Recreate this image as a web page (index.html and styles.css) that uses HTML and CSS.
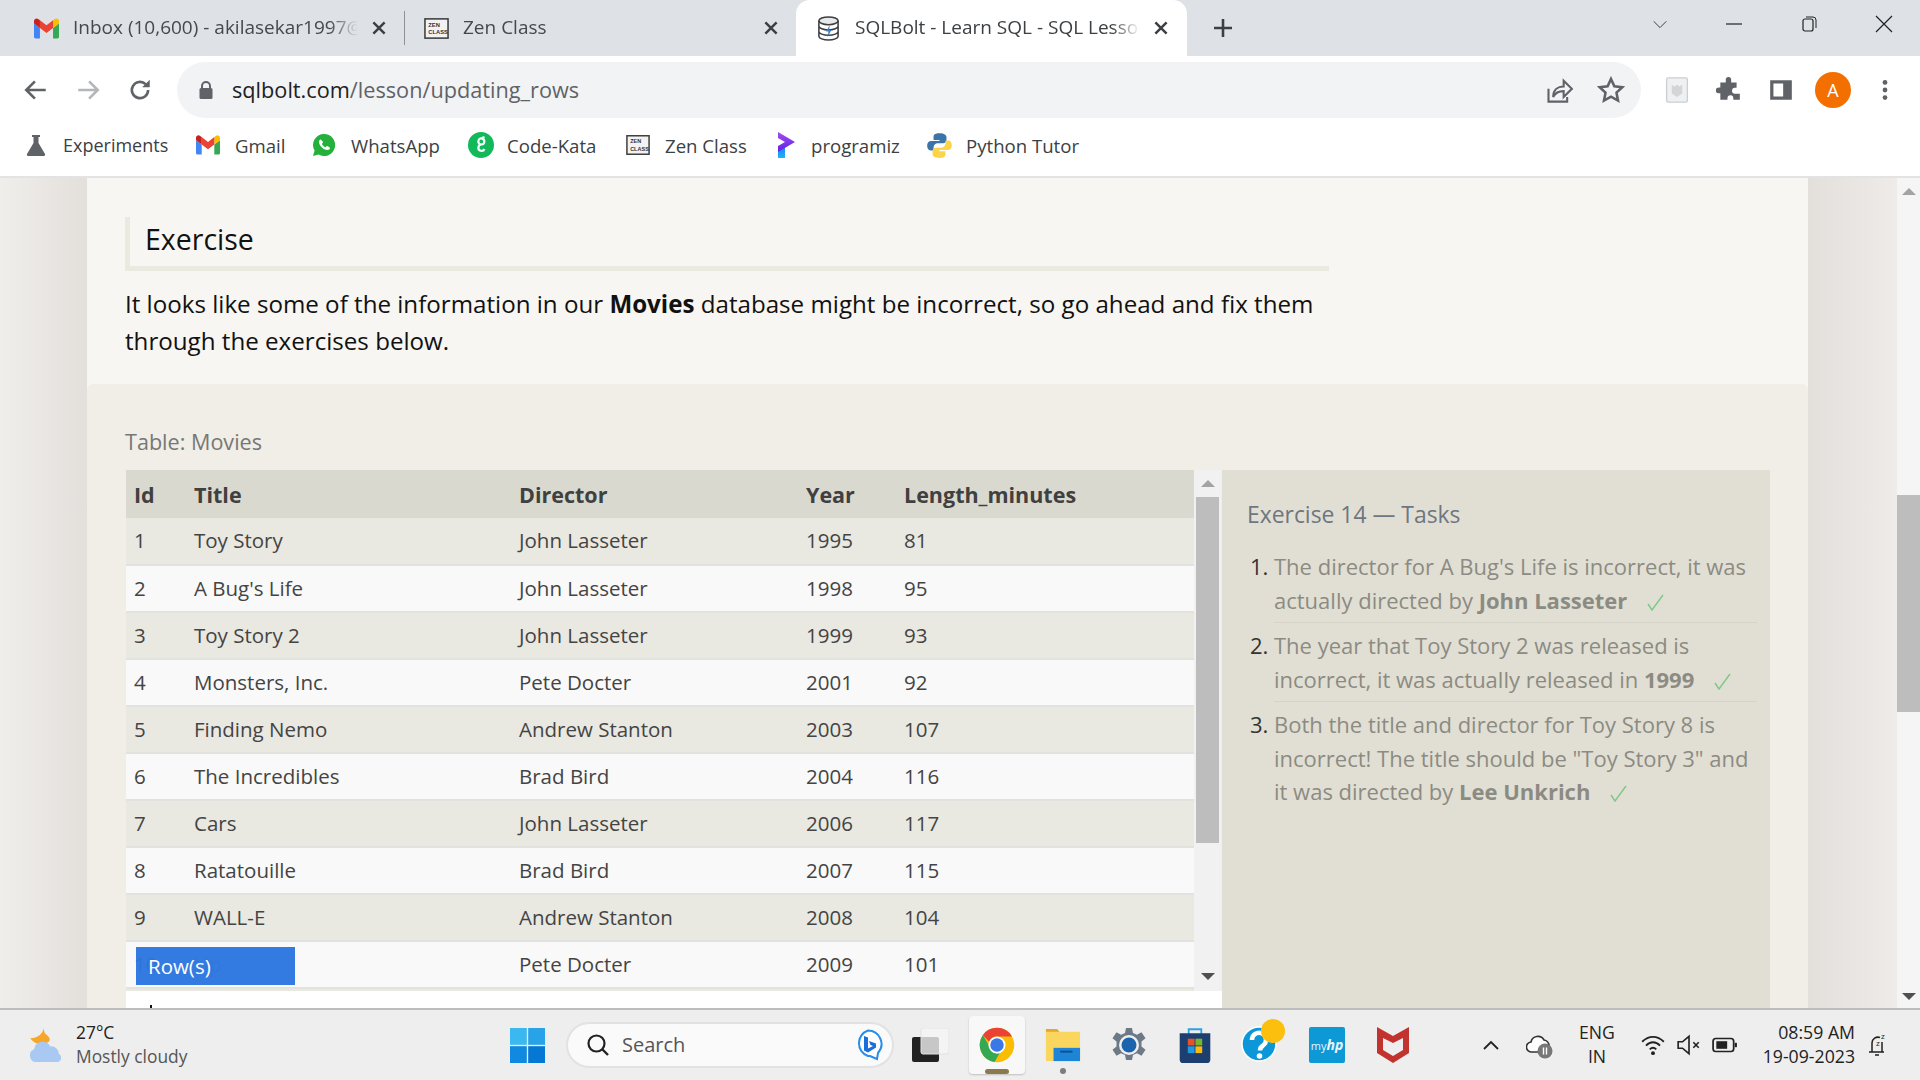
FILE: index.html
```html
<!DOCTYPE html>
<html lang="en">
<head>
    <meta charset="UTF-8">
    <title>SQLBolt - Learn SQL - SQL Lesson</title>
    <link rel="stylesheet" href="styles.css">
</head>
<body>
    <svg class="defs" width="0" height="0">
        <symbol id="gmail" viewBox="0 0 24 24">
            <path fill="#4285f4" d="M1.6 21.5h4.1V11.5L0 7.2v12.7c0 .9.7 1.6 1.6 1.6z"/>
            <path fill="#34a853" d="M18.3 21.5h4.1c.9 0 1.6-.7 1.6-1.6V7.2l-5.7 4.3z"/>
            <path fill="#fbbc04" d="M18.3 4.1v7.4L24 7.2V4.9c0-2.1-2.4-3.3-4.1-2z"/>
            <path fill="#ea4335" d="M5.7 11.5V4.1L12 8.9l6.3-4.8v7.4L12 16.2z"/>
            <path fill="#c5221f" d="M0 4.9v2.3l5.7 4.3V4.1L4.1 2.9C2.4 1.6 0 2.8 0 4.9z"/>
        </symbol>
        <symbol id="zen" viewBox="0 0 26 26">
            <rect x="1" y="3" width="24" height="20" fill="#f2f2f2" stroke="#3c3c3c" stroke-width="1.6"/>
            <text x="4.5" y="11" class="zen-text">ZEN</text>
            <text x="4.5" y="19" class="zen-text">CLASS</text>
        </symbol>
        <symbol id="close" viewBox="0 0 16 16">
            <path d="M3 3l10 10M13 3L3 13" stroke="#3c4043" stroke-width="2.2" fill="none"/>
        </symbol>
        <symbol id="tick" viewBox="0 0 17 17">
            <path d="M1 10l4 6L16 1" fill="none" stroke="#7fc98a" stroke-width="1.5"/>
        </symbol>
    </svg>

    <div class="tabstrip">
        <div class="tab">
            <svg class="tab-icon" viewBox="0 0 24 24"><use href="#gmail"/></svg>
            <span class="tab-title">Inbox (10,600) - akilasekar1997@gmail.com</span>
            <svg class="tab-close" viewBox="0 0 16 16"><use href="#close"/></svg>
        </div>
        <div class="tab tab-sep">
            <svg class="tab-icon" viewBox="0 0 26 26"><use href="#zen"/></svg>
            <span class="tab-title">Zen Class</span>
            <svg class="tab-close" viewBox="0 0 16 16"><use href="#close"/></svg>
        </div>
        <div class="tab tab-active">
            <svg class="tab-icon" viewBox="0 0 24 26">
                <ellipse cx="12" cy="5" rx="10" ry="4" fill="#e8e8e8" stroke="#3c4043" stroke-width="1.6"/>
                <path d="M2 5v16c0 2.2 4.5 4 10 4s10-1.8 10-4V5M2 10.5c0 2.2 4.5 4 10 4s10-1.8 10-4M2 16c0 2.2 4.5 4 10 4s10-1.8 10-4" fill="none" stroke="#3c4043" stroke-width="1.6"/>
                <path d="M13.5 9l-4 7H12l-1 6 4-7.5h-2.500z" fill="#3d7fc4"/>
            </svg>
            <span class="tab-title">SQLBolt - Learn SQL - SQL Lesson 13: Updating rows</span>
            <svg class="tab-close" viewBox="0 0 16 16"><use href="#close"/></svg>
        </div>
        <svg class="new-tab" viewBox="0 0 20 20"><path d="M10 1v18M1 10h18" stroke="#3c4043" stroke-width="2.6"/></svg>
        <div class="win-controls">
            <svg viewBox="0 0 20 20"><path d="M3 7l7 7 7-7" stroke="#3c4043" fill="none" stroke-width="1.1"/></svg>
            <svg viewBox="0 0 20 20"><path d="M2 10h16" stroke="#222" stroke-width="1.2"/></svg>
            <svg viewBox="0 0 20 20"><rect x="4" y="5" width="10" height="12" rx="2" fill="none" stroke="#222" stroke-width="1.2"/><path d="M7 3h7a3 3 0 0 1 3 3v8" fill="none" stroke="#222" stroke-width="1"/></svg>
            <svg viewBox="0 0 20 20"><path d="M2 2l16 16M18 2L2 18" stroke="#222" stroke-width="1.2"/></svg>
        </div>
    </div>

    <div class="toolbar">
        <svg class="nav-btn" viewBox="0 0 24 24"><path d="M21 12H4M11 4l-8 8 8 8" fill="none" stroke="#5f6368" stroke-width="2.4"/></svg>
        <svg class="nav-btn" viewBox="0 0 24 24"><path d="M3 12h17M13 4l8 8-8 8" fill="none" stroke="#b4b6b9" stroke-width="2.4"/></svg>
        <svg class="nav-btn" viewBox="0 0 24 24"><path d="M19.5 12a7.5 7.5 0 1 1-2.3-5.4" fill="none" stroke="#5f6368" stroke-width="2.4"/><path d="M21 2.5v7h-7z" fill="#5f6368"/></svg>
        <div class="omnibox">
            <svg class="lock" viewBox="0 0 16 20"><path d="M4 9V6a4 4 0 0 1 8 0v3" fill="none" stroke="#5f6368" stroke-width="2"/><rect x="1.5" y="8" width="13" height="11" rx="1.5" fill="#5f6368"/></svg>
            <span class="url"><span class="url-host">sqlbolt.com</span>/lesson/updating_rows</span>
            <svg class="omni-icon" viewBox="0 0 24 24"><path d="M3 11v11h16v-4" fill="none" stroke="#5f6368" stroke-width="1.8"/><path d="M7 18c0-6 4-9 9-9V4l7 7-7 7v-5c-4 0-7 1-9 5z" fill="none" stroke="#5f6368" stroke-width="1.8"/></svg>
            <svg class="omni-icon" viewBox="0 0 24 24"><path d="M12 2.5l2.9 6.3 6.8.8-5 4.7 1.300 6.800-6-3.400-6 3.400 1.300-6.800-5-4.700 6.800-.8z" fill="none" stroke="#5f6368" stroke-width="2.2"/></svg>
        </div>
        <svg class="ext-btn" viewBox="0 0 26 30"><rect x="1" y="1" width="24" height="28" rx="2" fill="#eef0f2" stroke="#c9cfd4" stroke-width="1.5"/><path d="M7 9l3 2 3-2 3 2 3-2v10l-6 4-6-4z" fill="#d3d6d8"/></svg>
        <svg class="ext-btn" viewBox="0 0 24 24"><path d="M9 2.5a2.5 2.5 0 0 1 5 0V5h5v5h-1.5a2.7 2.7 0 0 0 0 5.400H22V21h-6v-1.5a2.7 2.7 0 0 0-5.4 0V21H4v-6H2.5a2.7 2.7 0 0 1 0-5.400H4V5h5z" fill="#5f6368"/></svg>
        <svg class="ext-btn" viewBox="0 0 24 24"><path d="M2 3h20v18H2z" fill="#5f6368"/><path d="M5 6h9v12H5z" fill="#fff"/></svg>
        <span class="avatar">A</span>
        <svg class="ext-btn" viewBox="0 0 24 24"><circle cx="12" cy="5" r="2.2" fill="#5f6368"/><circle cx="12" cy="12" r="2.2" fill="#5f6368"/><circle cx="12" cy="19" r="2.2" fill="#5f6368"/></svg>
    </div>

    <div class="bookmarks">
        <a class="bm bm-1">
            <svg viewBox="0 0 24 24"><path d="M8 2h8v2h-1.5v6l6.5 11c.5 1-.2 2-1 2H4c-.8 0-1.500-1-1-2l6.500-11V4H8z" fill="#5f6368"/></svg>
            Experiments
        </a>
        <a class="bm bm-2"><svg viewBox="0 0 24 24"><use href="#gmail"/></svg>Gmail</a>
        <a class="bm bm-3">
            <svg viewBox="0 0 24 24"><path d="M12 1a11 11 0 0 0-9.400 16.600L1 23l5.600-1.500A11 11 0 1 0 12 1z" fill="#25b03c"/><path d="M8.500 6.500c-.6 0-1.500 1-1.500 2.500 0 3.500 4.500 8 8.500 8 1.500 0 2.500-1 2.500-2 0-.5-2.500-2-3-2s-1 1.200-1.500 1.200c-1 0-3.500-2.500-3.500-3.500 0-.5 1-1 1-1.500S9 6.500 8.500 6.500z" fill="#fff"/></svg>
            WhatsApp
        </a>
        <a class="bm bm-4">
            <svg viewBox="0 0 26 26"><circle cx="13" cy="13" r="13" fill="#11b95a"/><path d="M10.500 8.500a3 3 0 1 1 3 4 3.200 3.200 0 1 0 3 4.500M13.500 12.500a3 3 0 0 1-3-4M14 6l2.500-1" fill="none" stroke="#fff" stroke-width="2.2"/></svg>
            Code-Kata
        </a>
        <a class="bm bm-5"><svg viewBox="0 0 26 26"><use href="#zen"/></svg>Zen Class</a>
        <a class="bm bm-6">
            <svg viewBox="0 0 18 26">
                <defs>
                    <linearGradient id="prog-top" x1="0" y1="0" x2="0" y2="1"><stop offset="0" stop-color="#a64bf0"/><stop offset="1" stop-color="#5b24e6"/></linearGradient>
                    <linearGradient id="prog-stem" x1="0" y1="0" x2="0" y2="1"><stop offset="0" stop-color="#2a6df0"/><stop offset="1" stop-color="#18b4fb"/></linearGradient>
                </defs>
                <path d="M7 11L0 15v11h7z" fill="url(#prog-stem)"/>
                <path d="M0 0l17 10L0 20v-6l7-4-7-4z" fill="url(#prog-top)"/>
            </svg>
            programiz
        </a>
        <a class="bm bm-7">
            <svg viewBox="0 0 24 24">
                <path d="M11.800 1C7 1 6.700 3 6.700 4.500V7H12v1H4.500C2.500 8 1 9.700 1 12.200s1.500 4.300 3.500 4.300h2.200v-2.800c0-2 1.700-3.700 3.700-3.700h4.800c1.700 0 3-1.400 3-3V4.500C18.200 2.800 16.500 1 11.800 1z" fill="#3a74a8"/>
                <path d="M12.200 23c4.800 0 5.100-2 5.100-3.500V17H12v-1h7.500c2 0 3.500-1.700 3.500-4.200s-1.500-4.300-3.500-4.300h-2.200v2.800c0 2-1.700 3.700-3.700 3.700H8.800c-1.700 0-3 1.400-3 3v2.500c0 1.700 1.700 3.500 6.400 3.500z" fill="#fbd44a"/>
            </svg>
            Python Tutor
        </a>
    </div>

    <div class="viewport">
        <div class="gutter-left"></div>
        <main class="page">
            <section class="intro">
                <h2 class="intro-title">Exercise</h2>
                <p class="intro-text">It looks like some of the information in our <strong>Movies</strong> database might be incorrect, so go ahead and fix them through the exercises below.</p>
            </section>
            <section class="exercise">
                <div class="caption">Table: Movies</div>
                <div class="ex-body">
                    <div class="ex-left">
                        <div class="table-box">
                            <table class="movies">
                                <thead>
                                    <tr><th class="col-id">Id</th><th class="col-title">Title</th><th class="col-dir">Director</th><th class="col-year">Year</th><th>Length_minutes</th></tr>
                                </thead>
                                <tbody>
                                    <tr><td>1</td><td>Toy Story</td><td>John Lasseter</td><td>1995</td><td>81</td></tr>
                                    <tr><td>2</td><td>A Bug's Life</td><td>John Lasseter</td><td>1998</td><td>95</td></tr>
                                    <tr><td>3</td><td>Toy Story 2</td><td>John Lasseter</td><td>1999</td><td>93</td></tr>
                                    <tr><td>4</td><td>Monsters, Inc.</td><td>Pete Docter</td><td>2001</td><td>92</td></tr>
                                    <tr><td>5</td><td>Finding Nemo</td><td>Andrew Stanton</td><td>2003</td><td>107</td></tr>
                                    <tr><td>6</td><td>The Incredibles</td><td>Brad Bird</td><td>2004</td><td>116</td></tr>
                                    <tr><td>7</td><td>Cars</td><td>John Lasseter</td><td>2006</td><td>117</td></tr>
                                    <tr><td>8</td><td>Ratatouille</td><td>Brad Bird</td><td>2007</td><td>115</td></tr>
                                    <tr><td>9</td><td>WALL-E</td><td>Andrew Stanton</td><td>2008</td><td>104</td></tr>
                                    <tr><td>10</td><td class="cell-up">Up<span class="drag-badge">Row(s)</span></td><td>Pete Docter</td><td>2009</td><td>101</td></tr>
                                </tbody>
                            </table>
                            <div class="table-scroll">
                                <span class="arrow-up"></span>
                                <span class="table-thumb"></span>
                                <span class="arrow-down"></span>
                            </div>
                        </div>
                        <div class="editor"><span class="caret"></span></div>
                    </div>
                    <aside class="tasks">
                        <h3 class="tasks-title">Exercise 14 — Tasks</h3>
                        <ol class="task-list">
                            <li><span class="task-text">The director for A Bug's Life is incorrect, it was actually directed by <b>John Lasseter</b><svg class="tick" viewBox="0 0 17 17"><use href="#tick"/></svg></span></li>
                            <li><span class="task-text">The year that Toy Story 2 was released is incorrect, it was actually released in <b>1999</b><svg class="tick" viewBox="0 0 17 17"><use href="#tick"/></svg></span></li>
                            <li><span class="task-text">Both the title and director for Toy Story 8 is incorrect! The title should be "Toy Story 3" and it was directed by <b>Lee Unkrich</b><svg class="tick" viewBox="0 0 17 17"><use href="#tick"/></svg></span></li>
                        </ol>
                    </aside>
                </div>
            </section>
        </main>
        <div class="gutter-right"></div>
        <div class="page-scroll">
            <span class="arrow-up"></span>
            <span class="page-thumb"></span>
            <span class="arrow-down"></span>
        </div>
    </div>

    <footer class="taskbar">
        <div class="weather">
            <svg class="weather-icon" viewBox="0 0 38 40">
                <path d="M16 2c-1 6-5 10-14 11 3 5 10 8 17 5 5-2 4-5 1-8-3-2-4-5-4-8z" fill="#f6a72a"/>
                <path d="M8 38a7 7 0 0 1-2-13.500 9 9 0 0 1 17-3 8 8 0 0 1 9 8c3 1 4 8-2 8.500z" fill="#a9c8f2"/>
            </svg>
            <div class="weather-text">
                <span class="temp">27°C</span>
                <span class="cond">Mostly cloudy</span>
            </div>
        </div>
        <div class="slot">
            <svg class="start" viewBox="0 0 36 36">
                <rect width="17.3" height="17.3" fill="#3cb8f0"/><rect x="18.7" width="17.3" height="17.3" fill="#28a3e8"/>
                <rect y="18.7" width="17.3" height="17.3" fill="#0f8ae0"/><rect x="18.7" y="18.7" width="17.3" height="17.3" fill="#0578d4"/>
            </svg>
        </div>
        <div class="search">
            <svg class="search-icon" viewBox="0 0 24 24"><circle cx="10.5" cy="10.5" r="8" fill="none" stroke="#222" stroke-width="2.2"/><path d="M16 16l6 6" stroke="#222" stroke-width="2.4"/></svg>
            <span class="search-label">Search</span>
            <svg class="bing" viewBox="0 0 30 32"><path d="M15 1.500a13.500 13.500 0 0 1 10 22.500l-1 6-7-3h-2A13.500 13.500 0 0 1 15 1.500z" fill="#fff" stroke="#2a8ee8" stroke-width="2"/><path d="M11 7l4 1.500v11l5-2.500-2.500-1-1.500-4 7 2.500v4l-8 5-4-2z" fill="#1b6fd8"/></svg>
        </div>
        <div class="slot slot-view">
            <svg class="view-icon" viewBox="0 0 37 34"><rect x="0" y="9" width="27" height="25" rx="2" fill="#222"/><rect x="9" y="0" width="28" height="26" rx="2" fill="#f6f6f6" fill-opacity=".78" stroke="#e2e2e2"/></svg>
        </div>
        <div class="slot slot-active">
            <svg class="pin" viewBox="0 0 24 24">
                <circle cx="12" cy="12" r="11.5" fill="#fbbc04"/>
                <path d="M12 .5a11.500 11.500 0 0 1 10 5.800H12a5.700 5.700 0 0 0-5.300 3.500L2.600 5.300A11.500 11.500 0 0 1 12 .5z" fill="#ea4335"/>
                <path d="M2.600 5.300l4.500 8a5.700 5.700 0 0 0 6.500 4.400l-3.200 5.700A11.500 11.500 0 0 1 2.600 5.300z" fill="#34a853"/>
                <circle cx="12" cy="12" r="5.7" fill="#fff"/><circle cx="12" cy="12" r="4.5" fill="#3b78e7"/>
            </svg>
            <span class="running"></span>
        </div>
        <div class="slot">
            <svg class="pin" viewBox="0 0 36 38">
                <path d="M0 2h12l3 4v3H0z" fill="#e2a92a"/>
                <rect y="5" width="36" height="31" rx="1" fill="#fbd65f"/>
                <path d="M8 22h28v14H8z" fill="#1d84d6"/><rect x="15" y="25" width="13" height="2" fill="#0d4f8f"/>
            </svg>
            <span class="open-dot"></span>
        </div>
        <div class="slot">
            <svg class="pin" viewBox="0 0 36 36">
                <path d="M15 1h6l1 5 4 1.800 4.500-2.600 4 6-4 3.300v5l4 3.300-4 6-4.500-2.600-4 1.800-1 5h-6l-1-5-4-1.800-4.500 2.600-4-6 4-3.300v-5l-4-3.300 4-6 4.500 2.600 4-1.800z" fill="#6d7a86"/>
                <circle cx="18" cy="18" r="10" fill="#eee"/><circle cx="18" cy="18" r="7.5" fill="#1b63ad"/>
            </svg>
        </div>
        <div class="slot">
            <svg class="pin" viewBox="0 0 36 40">
                <path d="M11 8V2.500h14V8" fill="none" stroke="#2aa2e0" stroke-width="2"/>
                <path d="M1 7h34v29a4 4 0 0 1-4 4H5a4 4 0 0 1-4-4z" fill="#1d3f70"/>
                <rect x="10" y="13" width="7.5" height="7.5" fill="#e8502a"/><rect x="18.5" y="13" width="7.5" height="7.5" fill="#74b72f"/>
                <rect x="10" y="21.5" width="7.5" height="7.5" fill="#1e9ae4"/><rect x="18.5" y="21.5" width="7.5" height="7.5" fill="#fcb80e"/>
            </svg>
        </div>
        <div class="slot">
            <svg class="pin-help" viewBox="0 0 44 44">
                <circle cx="18" cy="25" r="17" fill="#0c98d8" stroke="#fff" stroke-width="1.5"/>
                <path d="M11 21a7 7 0 1 1 11 5.500c-2 1.300-3 2.500-3 5" fill="none" stroke="#fff" stroke-width="4.5"/>
                <circle cx="18.500" cy="37" r="2.800" fill="#fff"/>
                <circle cx="32" cy="12" r="12" fill="#fdbf0d"/>
            </svg>
        </div>
        <div class="slot">
            <div class="myhp">my<i>hp</i></div>
        </div>
        <div class="slot">
            <svg class="pin" viewBox="0 0 34 36"><path d="M1 0l16 9 16-9v26l-16 10L1 26z" fill="#c2332f"/><path d="M7 11l10 5 10-5v12l-10 6-10-6z" fill="#eee"/></svg>
        </div>
        <div class="tray">
            <svg class="tray-chevron" viewBox="0 0 18 12"><path d="M2 10l7-7 7 7" fill="none" stroke="#222" stroke-width="1.8"/></svg>
            <svg class="tray-cloud" viewBox="0 0 28 28"><path d="M6 21a5 5 0 0 1-1-10 7 7 0 0 1 13-2 6 6 0 0 1 5 6l-3 6z" fill="#fff" stroke="#333" stroke-width="1.6"/><circle cx="19" cy="20" r="7.5" fill="#777"/><path d="M17.500 16.500v7M20.500 16.500v7" stroke="#fff" stroke-width="1.4"/></svg>
            <div class="lang">ENG<br>IN</div>
            <svg class="tray-icon" viewBox="0 0 24 24"><path d="M2 9c6-6 14-6 20 0M5.500 12.500c4-4 9-4 13 0M9 16c2-2 4-2 6 0" fill="none" stroke="#222" stroke-width="1.7"/><circle cx="12" cy="19.5" r="1.8" fill="#222"/></svg>
            <svg class="tray-icon" viewBox="0 0 24 24"><path d="M2 9v6h4l6 5V4L6 9z" fill="none" stroke="#222" stroke-width="1.5"/><path d="M16 9.500l5 5M21 9.500l-5 5" stroke="#222" stroke-width="1.5"/></svg>
            <svg class="tray-icon" viewBox="0 0 24 24"><rect x="1" y="6" width="19" height="12" rx="2.500" fill="none" stroke="#222" stroke-width="1.6"/><rect x="4" y="8.500" width="10" height="7" fill="#222"/><rect x="21" y="10" width="2" height="4" fill="#222"/></svg>
            <div class="clock">08:59 AM<br>19-09-2023</div>
            <svg class="tray-bell" viewBox="0 0 24 26"><path d="M6 20V11a6 6 0 0 1 8-5.500M3 20h15M9 23h4M16 10v10" fill="none" stroke="#222" stroke-width="1.5"/><text x="15" y="7" class="bell-z">z</text><text x="10" y="14" class="bell-z">z</text></svg>
        </div>
    </footer>
</body>
</html>
```

FILE: styles.css
```css
* {
    box-sizing: border-box;
}

html, body {
    height: 100%;
}

body {
    margin: 0;
    width: 1920px;
    height: 1080px;
    overflow: hidden;
    display: flex;
    flex-direction: column;
    font-family: 'Open Sans', sans-serif;
    background-color: #fff;
}

.defs {
    position: absolute;
}

.zen-text {
    font-family: 'Liberation Sans', sans-serif;
    font-size: 6px;
    font-weight: bold;
    fill: #333;
}

/* browser chrome */
.tabstrip {
    height: 56px;
    flex: none;
    display: flex;
    background-color: #dee1e6;
    color: #45494f;
    font-size: 19px;
}

.tab {
    width: 398px;
    height: 56px;
    padding: 0 16px 0 34px;
    display: flex;
    align-items: center;
    position: relative;
}

.tab:first-child {
    width: 404px;
}

.tab-sep {
    width: 392px;
    padding-left: 20px;
}

.tab-sep::before {
    content: '';
    position: absolute;
    left: 0;
    top: 11px;
    height: 34px;
    width: 1px;
    background-color: #8e9196;
}

.tab-active {
    width: 391px;
    padding: 0 17px 0 20px;
    background-color: #fff;
    border-radius: 14px 14px 0 0;
    color: #3c4043;
}

.tab-icon {
    width: 25px;
    height: 25px;
    flex: none;
    margin-right: 14px;
}

.tab-title {
    flex: 1;
    margin-top: -2px;
    white-space: nowrap;
    overflow: hidden;
    -webkit-mask-image: linear-gradient(to right, #000 90%, transparent 100%);
    mask-image: linear-gradient(to right, #000 90%, transparent 100%);
}

.tab-close {
    width: 18px;
    height: 18px;
    flex: none;
    margin-left: 12px;
}

.new-tab {
    width: 20px;
    height: 20px;
    margin: 18px 0 0 26px;
}

.win-controls {
    margin-left: auto;
    display: flex;
    align-items: flex-start;
}

.win-controls svg {
    width: 20px;
    height: 20px;
    margin: 14px 26px 0 29px;
}

.win-controls svg:first-child {
    width: 18px;
}

.toolbar {
    height: 62px;
    flex: none;
    display: flex;
    align-items: flex-end;
    padding-left: 10px;
    background-color: #fff;
}

.nav-btn {
    width: 26px;
    height: 26px;
    flex: none;
    margin: 0 13px 15px;
}

.omnibox {
    width: 1464px;
    height: 56px;
    margin-left: 11px;
    margin-right: 10px;
    flex: none;
    padding: 0 16px 0 21px;
    display: flex;
    align-items: center;
    background-color: #f1f3f4;
    border-radius: 28px;
}

.lock {
    width: 16px;
    height: 20px;
    flex: none;
}

.url {
    margin: -2px 0 0 18px;
    flex: 1;
    font-size: 21.7px;
    color: #5f6368;
}

.url-host {
    color: #202124;
}

.omni-icon {
    width: 28px;
    height: 28px;
    flex: none;
    margin-left: 24px;
}

.ext-btn {
    width: 26px;
    height: 26px;
    flex: none;
    margin: 0 13px 15px;
}

.avatar {
    width: 36px;
    height: 36px;
    flex: none;
    margin: 0 8px 10px;
    border-radius: 50%;
    background-color: #f26f00;
    color: #fff;
    font-size: 18px;
    line-height: 36px;
    text-align: center;
}

.bookmarks {
    height: 60px;
    flex: none;
    display: flex;
    align-items: center;
    padding: 0 0 4px 24px;
    background-color: #fff;
    border-bottom: 2px solid #e3e3e3;
    font-size: 18.6px;
    color: #3c4043;
}

.bm {
    display: flex;
    align-items: center;
    gap: 15px;
    white-space: nowrap;
}

.bm svg {
    width: 24px;
    height: 24px;
    flex: none;
}

.bm-1 {
    width: 172px;
    font-size: 18px;
}

.bm-2 { width: 116px; }
.bm-3 { width: 157px; }
.bm-5 { width: 147px; }

.bm-4 {
    width: 157px;
    gap: 13px;
}

.bm-4 svg {
    width: 26px;
    height: 26px;
    margin-left: -1px;
}

.bm-6 {
    width: 155px;
}

.bm-6 svg {
    width: 18px;
    height: 26px;
    margin-left: 5px;
}

.bm-7 {
    gap: 13px;
}

.bm-7 svg {
    width: 27px;
    height: 27px;
    margin-left: -2px;
}

/* page */
.viewport {
    flex: 1;
    min-height: 0;
    display: flex;
    overflow: hidden;
    background-color: #e6e2df;
}

.gutter-left {
    width: 87px;
    flex: none;
    background: linear-gradient(to right, #f0eeeb, #e3dfdb);
}

.gutter-right {
    width: 89px;
    flex: none;
    background: linear-gradient(to right, #e3dfdb, #efebe8);
}

.page {
    width: 1721px;
    flex: none;
    background-color: #f7f6f2;
}

.intro {
    height: 206px;
    padding: 39px 0 0 38px;
}

.intro-title {
    width: 1204px;
    height: 54px;
    margin: 0;
    padding-left: 15px;
    border-left: 5px solid #ebeae1;
    border-bottom: 5px solid #ebeae1;
    font-size: 28.5px;
    font-weight: 400;
    line-height: 44px;
    color: #111;
}

.intro-text {
    width: 1204px;
    margin: 14px 0 0;
    font-size: 24.15px;
    line-height: 37px;
    color: #111;
}

.exercise {
    height: 624px;
    padding: 0 38px;
    background-color: #f0eee6;
    border-radius: 6px 6px 0 0;
}

.caption {
    height: 86px;
    padding-top: 43px;
    font-size: 21.6px;
    line-height: 30px;
    color: #777;
}

.ex-body {
    display: flex;
}

.ex-left {
    width: 1096px;
    margin-left: 1px;
    flex: none;
}

.table-box {
    display: flex;
    height: 521px;
    margin-right: 1px;
    background-color: #e9e8e1;
}

.movies {
    width: 1068px;
    flex: none;
    table-layout: fixed;
    border-collapse: collapse;
    font-size: 20.5px;
    color: #444;
    align-self: flex-start;
}

.movies th {
    height: 48px;
    padding: 0 8px;
    text-align: left;
    font-size: 21.5px;
    font-weight: 700;
    background-color: #dad9cf;
    color: #404040;
}

.movies td {
    height: 47px;
    padding: 0 8px 2px;
    border-bottom: 2px solid #e2e2de;
    white-space: nowrap;
}

.movies tbody tr:nth-child(odd) td {
    background-color: #e9e8e1;
}

.movies tbody tr:nth-child(even) td {
    background-color: #f9f9f9;
}

.col-id { width: 60px; }
.col-title { width: 325px; }
.col-dir { width: 287px; }
.col-year { width: 98px; }

.cell-up {
    position: relative;
    color: #999;
}

.drag-badge {
    position: absolute;
    left: -50px;
    top: 5px;
    width: 159px;
    height: 38px;
    padding-left: 12px;
    background-color: rgba(43, 118, 224, 0.96);
    color: #fff;
    line-height: 38px;
}

.table-scroll {
    width: 27px;
    flex: none;
    display: flex;
    flex-direction: column;
    align-items: center;
    background-color: #f1f1f1;
}

.table-thumb {
    width: 23px;
    height: 346px;
    margin-top: 10px;
    background-color: #bdbdbd;
}

.table-scroll .arrow-down {
    margin-top: auto;
    margin-bottom: 11px;
}

.arrow-up {
    margin-top: 10px;
    width: 0;
    height: 0;
    border-left: 7px solid transparent;
    border-right: 7px solid transparent;
    border-bottom: 7px solid #a3a3a3;
}

.arrow-down {
    width: 0;
    height: 0;
    border-left: 7px solid transparent;
    border-right: 7px solid transparent;
    border-top: 7px solid #505050;
}

.editor {
    height: 37px;
    background-color: #fff;
    position: relative;
}

.caret {
    position: absolute;
    left: 24px;
    top: 14px;
    width: 2px;
    height: 24px;
    background-color: #111;
}

.tasks {
    width: 548px;
    flex: none;
    height: 560px;
    padding: 24px 0 0 25px;
    background-color: #e1dfd3;
}

.tasks-title {
    margin: 0;
    font-size: 22.9px;
    font-weight: 400;
    line-height: 42px;
    color: #6e7681;
}

.task-list {
    margin: 14px 13px 0 0;
    padding: 0 0 0 27px;
    font-size: 22px;
    line-height: 33.5px;
    color: #333;
}

.task-list li {
    padding-bottom: 5px;
    margin-bottom: 6px;
    border-bottom: 1px solid #d6d4c8;
}

.task-list li:last-child {
    border-bottom: 0;
}

.task-text {
    color: #8c8b83;
}

.tick {
    width: 17px;
    height: 17px;
    margin-left: 20px;
    vertical-align: -2px;
}

.page-scroll {
    width: 23px;
    flex: none;
    display: flex;
    flex-direction: column;
    align-items: center;
    background-color: #f5f5f5;
}

.page-thumb {
    width: 23px;
    height: 217px;
    margin-top: 300px;
    background-color: #bdbdbd;
}

.page-scroll .arrow-down {
    margin-top: auto;
    margin-bottom: 8px;
}

/* windows taskbar */
.taskbar {
    height: 72px;
    flex: none;
    display: flex;
    align-items: center;
    background-color: #eeeeee;
    border-top: 2px solid #bdbdbd;
}

.weather {
    width: 494px;
    flex: none;
    padding-left: 28px;
    display: flex;
    align-items: center;
    gap: 11px;
}

.weather-icon {
    width: 37px;
    height: 38px;
}

.weather-text {
    margin-top: -2px;
    display: flex;
    flex-direction: column;
    font-size: 17.4px;
    line-height: 24px;
}

.temp {
    color: #222;
}

.cond {
    color: #555;
}

.slot {
    width: 66px;
    height: 58px;
    flex: none;
    position: relative;
    display: flex;
    align-items: center;
    justify-content: center;
}

.slot-view {
    width: 64px;
    margin-right: 6px;
    padding-left: 9px;
}

.slot-active {
    width: 56px;
    margin: 0 5px;
    background-color: #f8f8f8;
    border-radius: 4px;
    box-shadow: 0 1px 2px rgba(0, 0, 0, 0.2);
}

.start {
    width: 35px;
    height: 35px;
}

.pin {
    width: 36px;
    height: 36px;
}

.view-icon {
    width: 37px;
    height: 34px;
}

.pin-help {
    width: 44px;
    height: 44px;
    margin: -8px 0 0 4px;
}

.running {
    position: absolute;
    left: 16px;
    bottom: 0;
    width: 24px;
    height: 5px;
    border-radius: 3px;
    background-color: #8c7a4e;
}

.open-dot {
    position: absolute;
    left: 30px;
    bottom: 0;
    width: 6px;
    height: 6px;
    border-radius: 50%;
    background-color: #7d7d7d;
}

.search {
    width: 328px;
    height: 46px;
    flex: none;
    margin-left: 6px;
    padding: 0 9px 0 18px;
    display: flex;
    align-items: center;
    background-color: #fafafa;
    border: 2px solid #e2e2e2;
    border-radius: 23px;
}

.search-icon {
    width: 24px;
    height: 24px;
    flex: none;
}

.search-label {
    flex: 1;
    margin: -2px 0 0 12px;
    font-size: 20px;
    color: #555;
}

.bing {
    width: 30px;
    height: 32px;
    flex: none;
}

.myhp {
    width: 36px;
    height: 36px;
    border-radius: 2px;
    background-color: #0d98d6;
    color: #e8f6fc;
    font-size: 11px;
    line-height: 36px;
    text-align: center;
}

.myhp i {
    font-size: 14px;
    font-weight: 700;
}

.tray {
    flex: 1;
    padding-left: 56px;
    display: flex;
    align-items: center;
}

.tray-chevron {
    width: 18px;
    height: 12px;
    flex: none;
}

.tray-cloud {
    width: 28px;
    height: 28px;
    flex: none;
    margin-left: 26px;
}

.lang {
    width: 66px;
    margin: -2px 0 0 10px;
    flex: none;
    font-size: 17.6px;
    line-height: 24px;
    text-align: center;
    color: #222;
}

.tray-icon {
    width: 26px;
    height: 26px;
    flex: none;
    margin-left: 10px;
}

.clock {
    width: 117px;
    margin-top: -2px;
    flex: none;
    font-size: 17.7px;
    line-height: 24px;
    text-align: right;
    color: #222;
    white-space: nowrap;
}

.tray-bell {
    width: 24px;
    height: 26px;
    flex: none;
    margin-left: 11px;
}

.bell-z {
    font-size: 8px;
    fill: #222;
    font-family: 'Open Sans', sans-serif;
}
```
